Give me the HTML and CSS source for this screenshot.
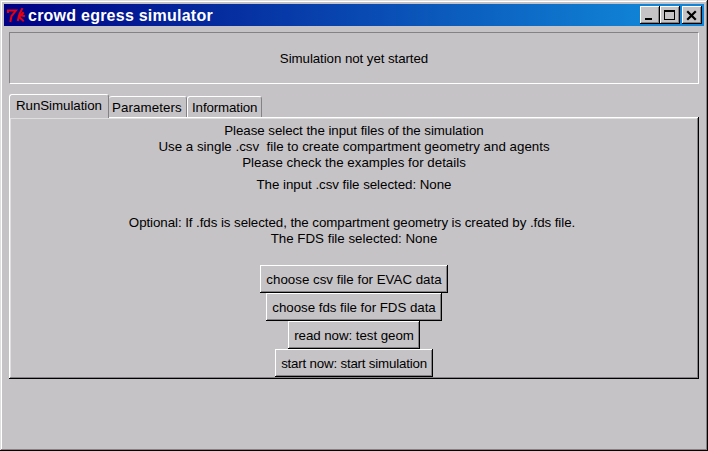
FILE: index.html
```html
<!DOCTYPE html>
<html lang="en">
<head>
<meta charset="utf-8">
<title>crowd egress simulator</title>
<link rel="stylesheet" href="styles.css">
</head>
<body>
<div class="window">
  <header class="titlebar">
    <svg class="logo" width="20" height="18" viewBox="0 0 20 18" fill="none" stroke="#e80010" stroke-linecap="square">
      <path d="M2 6V4.500H10L8 7L5.500 10L4.500 15" stroke-width="2"/>
      <path d="M16 3L13.500 8L12 14" stroke-width="2"/>
      <path d="M17 7L13 11L17 14.500M14 9L18 10" stroke-width="2"/>
    </svg>
    <h1 class="title">crowd egress simulator</h1>
    <div class="controls">
      <button class="control" aria-label="Minimize"><svg width="20" height="18" shape-rendering="crispEdges"><path d="M5 12h7v2h-7z"/></svg></button>
      <button class="control" aria-label="Maximize"><svg width="20" height="18" shape-rendering="crispEdges"><path fill-rule="evenodd" d="M4 4h11v10H4zM5 6v7h9V6z"/></svg></button>
      <button class="control close" aria-label="Close"><svg width="20" height="18"><path d="M6 6L13 13M13 6L6 13" stroke="#000" stroke-width="2.200" stroke-linecap="square"/></svg></button>
    </div>
  </header>
  <main class="content">
    <div class="status"><span class="s0">Simulation not yet started</span></div>
    <nav class="tabs">
      <div class="tab selected"><span>RunSimulation</span></div>
      <div class="tab params"><span>Parameters</span></div>
      <div class="tab info"><span>Information</span></div>
    </nav>
    <section class="panel">
      <p class="intro"><span class="s1">Please select the input files of the simulation</span><br><span class="s2">Use a single .csv&nbsp; file to create compartment geometry and agents</span><br><span class="s3">Please check the examples for details</span></p>
      <p class="csv"><span class="s4">The input .csv file selected: None</span></p>
      <p class="fds"><span class="s5">Optional: If .fds is selected, the compartment geometry is created by .fds file.</span><br><span class="s6">The FDS file selected: None</span></p>
      <div class="actions">
        <button class="action b1"><span>choose csv file for EVAC data</span></button>
        <button class="action b2"><span>choose fds file for FDS data</span></button>
        <button class="action b3"><span>read now: test geom</span></button>
        <button class="action b4"><span>start now: start simulation</span></button>
      </div>
    </section>
  </main>
</div>
</body>
</html>
```
FILE: styles.css
```css
* { box-sizing: border-box; }
body {
  margin: 0;
  font: 13.33px/16px "Liberation Sans", Arial, sans-serif;
  color: #000;
}
p, h1 { margin: 0; }
button { font: inherit; color: inherit; padding: 0; border: 0; border-radius: 0; }
.window {
  width: 708px;
  height: 451px;
  padding: 4px;
  background: #c6c3c6;
  box-shadow: inset -1px -1px #000, inset 1px 1px #dedfde, inset -2px -2px #848284, inset 2px 2px #fff;
}
.titlebar {
  display: flex;
  height: 22px;
  background: linear-gradient(90deg, #000084, #1084d6 92%);
}
.logo { margin: 2px 0 0 2px; flex: none; }
.title {
  margin-left: 2px;
  font-size: 16px;
  line-height: 23px;
  letter-spacing: 0.24px;
  color: #fff;
  white-space: nowrap;
}
.controls { display: flex; margin: 2px 2px 0 auto; }
.control, .action {
  background: #c6c3c6;
  box-shadow: inset -1px -1px #000, inset 1px 1px #fff, inset -2px -2px #848284;
}
.control { width: 20px; height: 18px; }
.control svg { display: block; }
.close { margin-left: 2px; }
.content { padding: 6px 5px 0; }
.status {
  display: flex;
  align-items: center;
  justify-content: center;
  height: 52px;
  padding-top: 1px;
  border: 1px solid;
  border-color: #848284 #fff #fff #848284;
}
.s0 { letter-spacing: -0.08px; }
.s1 { letter-spacing: -0.06px; }
.s4 { letter-spacing: -0.04px; }
.s5 { letter-spacing: -0.07px; margin-right: 4px; }
.tabs { display: flex; align-items: flex-end; height: 23px; margin-top: 10px; }
.tab {
  height: 21px;
  border: 1px solid;
  border-color: #fff #848284 transparent #fff;
  border-radius: 3px 3px 0 0;
  border-bottom: 0;
  white-space: nowrap;
  padding: 3px 0 0 3px;
}
.selected { width: 100px; height: 24px; margin-bottom: -1px; padding: 3px 0 0 6px; position: relative; background: #c6c3c6; letter-spacing: -0.06px; }
.params { width: 78px; border-left: 0; letter-spacing: 0.08px; }
.info { width: 75px; padding-left: 4px; letter-spacing: -0.12px; }
.panel {
  height: 262px;
  padding-top: 6px;
  text-align: center;
  white-space: nowrap;
  box-shadow: inset -1px -1px #000, inset 1px 1px #fff, inset -2px -2px #848284, inset 2px 2px #dedfde;
}
.csv { margin-top: 6px; }
.fds { margin-top: 22px; }
.actions { display: flex; flex-direction: column; align-items: center; margin-top: 18px; }
.action { height: 28px; padding-top: 2px; }
.b1 { width: 188px; }
.b2 { width: 176px; }
.b3 { width: 132px; }
.b4 { width: 158px; }
.b2 span { letter-spacing: -0.04px; }
.b3 span { letter-spacing: -0.06px; }
.b4 span { letter-spacing: -0.2px; }
```
